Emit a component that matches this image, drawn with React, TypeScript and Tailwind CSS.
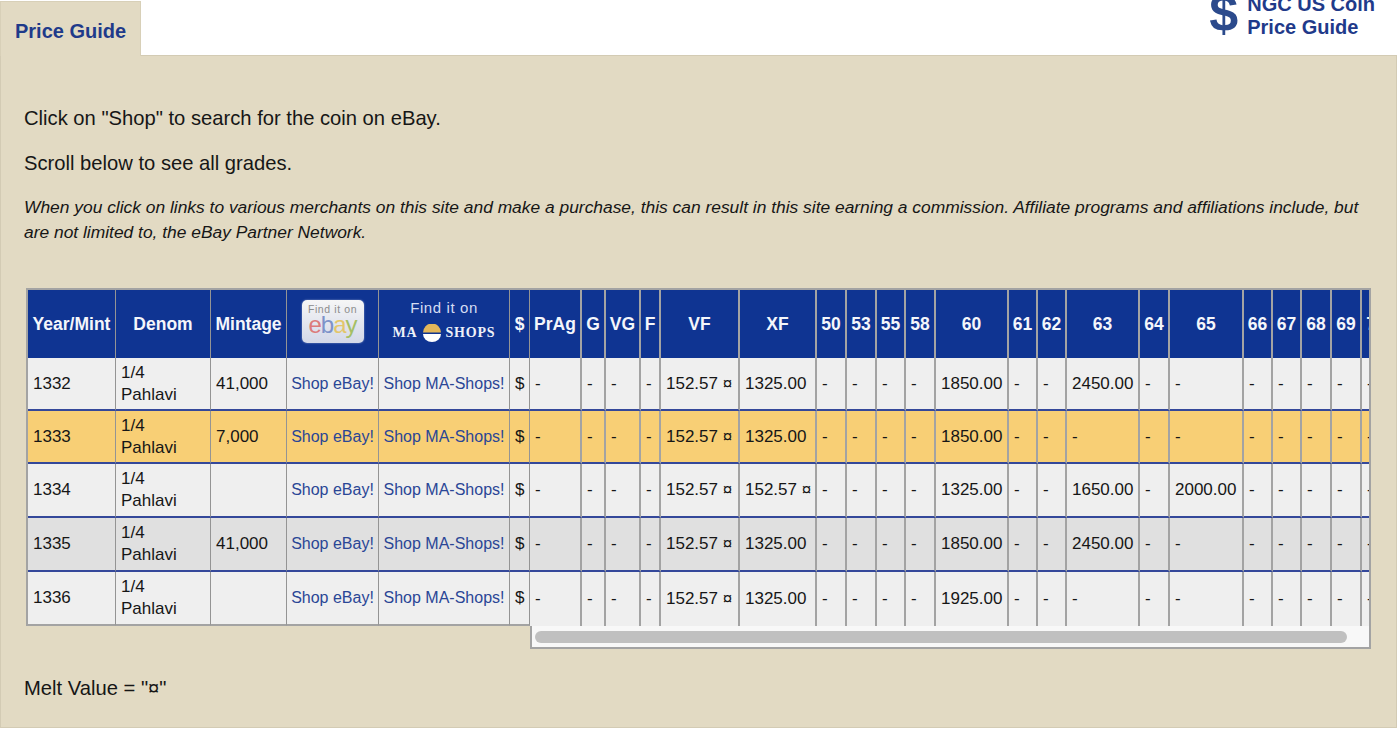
import React from "react";

type Row = {
  year: string;
  mintage: string;
  bg: string;
  height: string;
  xf: string;
  v60: string;
  v63: string;
  v65: string;
};

const rows: Row[] = [
  { year: "1332", mintage: "41,000", bg: "bg-[#efefef]", height: "h-[53px]", xf: "1325.00", v60: "1850.00", v63: "2450.00", v65: "-" },
  { year: "1333", mintage: "7,000", bg: "bg-[#f8cf75]", height: "h-[53px]", xf: "1325.00", v60: "1850.00", v63: "-", v65: "-" },
  { year: "1334", mintage: "", bg: "bg-[#efefef]", height: "h-[54px]", xf: "152.57 ¤", v60: "1325.00", v63: "1650.00", v65: "2000.00" },
  { year: "1335", mintage: "41,000", bg: "bg-[#e0e0e0]", height: "h-[54px]", xf: "1325.00", v60: "1850.00", v63: "2450.00", v65: "-" },
  { year: "1336", mintage: "", bg: "bg-[#efefef]", height: "h-[54px]", xf: "1325.00", v60: "1925.00", v63: "-", v65: "-" },
];

const gradeCols = [
  { label: "PrAg", width: "w-[52px]" },
  { label: "G", width: "w-[24px]" },
  { label: "VG", width: "w-[35px]" },
  { label: "F", width: "w-[20px]" },
  { label: "VF", width: "w-[79px]" },
  { label: "XF", width: "w-[77px]" },
  { label: "50", width: "w-[30px]" },
  { label: "53", width: "w-[30px]" },
  { label: "55", width: "w-[29px]" },
  { label: "58", width: "w-[30px]" },
  { label: "60", width: "w-[73px]" },
  { label: "61", width: "w-[29px]" },
  { label: "62", width: "w-[29px]" },
  { label: "63", width: "w-[73px]" },
  { label: "64", width: "w-[30px]" },
  { label: "65", width: "w-[74px]" },
  { label: "66", width: "w-[29px]" },
  { label: "67", width: "w-[29px]" },
  { label: "68", width: "w-[30px]" },
  { label: "69", width: "w-[30px]" },
  { label: "70", width: "w-[30px]" },
];

const thClass = "border-r border-[#949494] p-0 text-center align-middle text-[17.5px] font-bold text-[#f4f6fb]";
const gradeThClass = "border-r-2 border-[#a3a3a3] p-0 text-center align-middle text-[17.5px] font-bold text-[#f4f6fb]";
const tdClass = "border-r border-b-2 border-r-[#949494] border-b-[#34489a] px-[5px] py-0 align-middle text-[17px] leading-[22px] text-[#161616]";
const gradeTdClass = "border-r-2 border-b-2 border-r-[#a3a3a3] border-b-[#34489a] px-[5px] py-0 align-middle text-[17px] leading-[22px] whitespace-nowrap text-[#161616]";
const linkClass = "border-r border-b-2 border-r-[#949494] border-b-[#34489a] p-0 text-center align-middle text-[16px] text-[#2a4696]";

function EbayBadge() {
  return (
    <div className="mx-auto mb-[5px] flex h-[43px] w-[62px] flex-col items-center rounded-[5px] bg-gradient-to-b from-[#f6f6f6] to-[#d3d8e8] pt-[3px] font-normal shadow-[0_0_2px_#8fa0cc]">
      <span className="text-[10.5px] leading-[12px] tracking-[0.6px] text-[#8c8c8c]">Find it on</span>
      <span className="-mt-[2px] text-[24px] leading-[24px] tracking-[-1px]">
        <span className="text-[#dc7b7b]">e</span>
        <span className="text-[#7d92c9]">b</span>
        <span className="text-[#e3c66a]">a</span>
        <span className="text-[#a5bf64]">y</span>
      </span>
    </div>
  );
}

function MaShopsBadge() {
  return (
    <div className="mb-[9px] flex flex-col items-center font-normal">
      <span className="text-[15px] leading-[20px] tracking-[0.6px] text-[#d5ddf2]">Find it on</span>
      <span className="mt-[6px] flex items-center gap-[5px] font-['Liberation_Serif',serif] text-[14px] leading-[18px] font-bold tracking-[0.8px] text-[#eef1f8]">
        MA
        <svg width="18" height="18" viewBox="0 0 18 18">
          <path d="M0 8.5a9 9 0 0 1 18 0z" fill="#e2b65a" />
          <path d="M0 10h18a9 8 0 0 1-18 0z" fill="#ffffff" />
        </svg>
        SHOPS
      </span>
    </div>
  );
}

function gradeValue(row: Row, label: string) {
  if (label === "VF") return "152.57 ¤";
  if (label === "XF") return row.xf;
  if (label === "60") return row.v60;
  if (label === "63") return row.v63;
  if (label === "65") return row.v65;
  return "-";
}

export default function App() {
  return (
    <div className="h-[730px] w-[1400px] overflow-hidden bg-white font-['Liberation_Sans',Arial,sans-serif] text-[#161616]">
      {/* top strip with tab and logo */}
      <div className="flex h-[56px] w-[1397px] items-start justify-between overflow-hidden">
        <div className="mt-px flex h-[55px] w-[141px] items-center border-t border-r border-l border-[#d8d0b8] bg-[#e2dac3] pt-[3px] pl-[14px] text-[20px] font-bold text-[#1f3a8a]">
          Price Guide
        </div>
        <div className="-mt-[7px] mr-[22px] flex items-start gap-[9px]">
          <span className="-mt-[6px] text-[52px] leading-[52px] font-bold text-[#2b4a8c]">$</span>
          <div className="text-[20px] leading-[23px] font-bold text-[#1f3a8a]">
            <div>NGC US Coin</div>
            <div>Price Guide</div>
          </div>
        </div>
      </div>

      {/* panel */}
      <div className="-mt-px h-[673px] w-[1397px] border border-[#d3cbb4] bg-[#e2dac3] pt-[50px] pr-[24px] pl-[23px]">
        <p className="text-[20.2px] leading-[24px]">Click on "Shop" to search for the coin on eBay.</p>
        <p className="mt-[21px] text-[20.2px] leading-[24px]">Scroll below to see all grades.</p>
        <p className="mt-[20px] text-[17.4px] leading-[25px] italic">
          When you click on links to various merchants on this site and make a purchase, this can result in this site earning a commission. Affiliate programs and affiliations include, but are not limited to, the eBay Partner Network.
        </p>

        <div className="mt-[43px] ml-[2px] flex items-start">
          {/* frozen columns */}
          <table className="w-[504px] shrink-0 table-fixed border-separate border-spacing-0 border-t-2 border-l-2 border-[#a3a3a3]">
            <colgroup>
              <col className="w-[88px]" />
              <col className="w-[95px]" />
              <col className="w-[76px]" />
              <col className="w-[92px]" />
              <col className="w-[131px]" />
              <col className="w-[20px]" />
            </colgroup>
            <thead>
              <tr className="h-[68px] bg-[#0f3492]">
                <th className={thClass}>Year/Mint</th>
                <th className={thClass}>Denom</th>
                <th className={thClass}>Mintage</th>
                <th className={thClass}><EbayBadge /></th>
                <th className={thClass}><MaShopsBadge /></th>
                <th className={thClass}>$</th>
              </tr>
            </thead>
            <tbody>
              {rows.map((row) => (
                <tr key={row.year} className={`${row.bg} ${row.height} last:[&>td]:border-b-[#a3a3a3]`}>
                  <td className={tdClass}>{row.year}</td>
                  <td className={tdClass}>1/4<br />Pahlavi</td>
                  <td className={tdClass}>{row.mintage}</td>
                  <td className={linkClass}>Shop eBay!</td>
                  <td className={linkClass}>Shop MA-Shops!</td>
                  <td className={tdClass}>$</td>
                </tr>
              ))}
            </tbody>
          </table>

          {/* scrolling grades */}
          <div className="w-[841px] shrink-0 overflow-hidden border-r-2 border-b-2 border-[#a3a3a3]">
            <table className="w-[862px] table-fixed border-separate border-spacing-0 border-t-2 border-[#a3a3a3]">
              <colgroup>
                {gradeCols.map((col) => (
                  <col key={col.label} className={col.width} />
                ))}
              </colgroup>
              <thead>
                <tr className="h-[68px] bg-[#0f3492]">
                  {gradeCols.map((col) => (
                    <th key={col.label} className={gradeThClass}>{col.label}</th>
                  ))}
                </tr>
              </thead>
              <tbody>
                {rows.map((row) => (
                  <tr key={row.year} className={`${row.bg} ${row.height} last:[&>td]:border-b-0`}>
                    {gradeCols.map((col) => (
                      <td key={col.label} className={gradeTdClass}>{gradeValue(row, col.label)}</td>
                    ))}
                  </tr>
                ))}
              </tbody>
            </table>
            <div className="flex h-[21px] items-center border-l-2 border-[#a3a3a3] bg-[#f8f8f8] px-[3px]">
              <div className="h-[12px] w-[812px] rounded-full bg-[#c0c0c0]" />
            </div>
          </div>
        </div>

        <p className="mt-[27px] text-[20.2px] leading-[24px]">Melt Value = "¤"</p>
      </div>
    </div>
  );
}
